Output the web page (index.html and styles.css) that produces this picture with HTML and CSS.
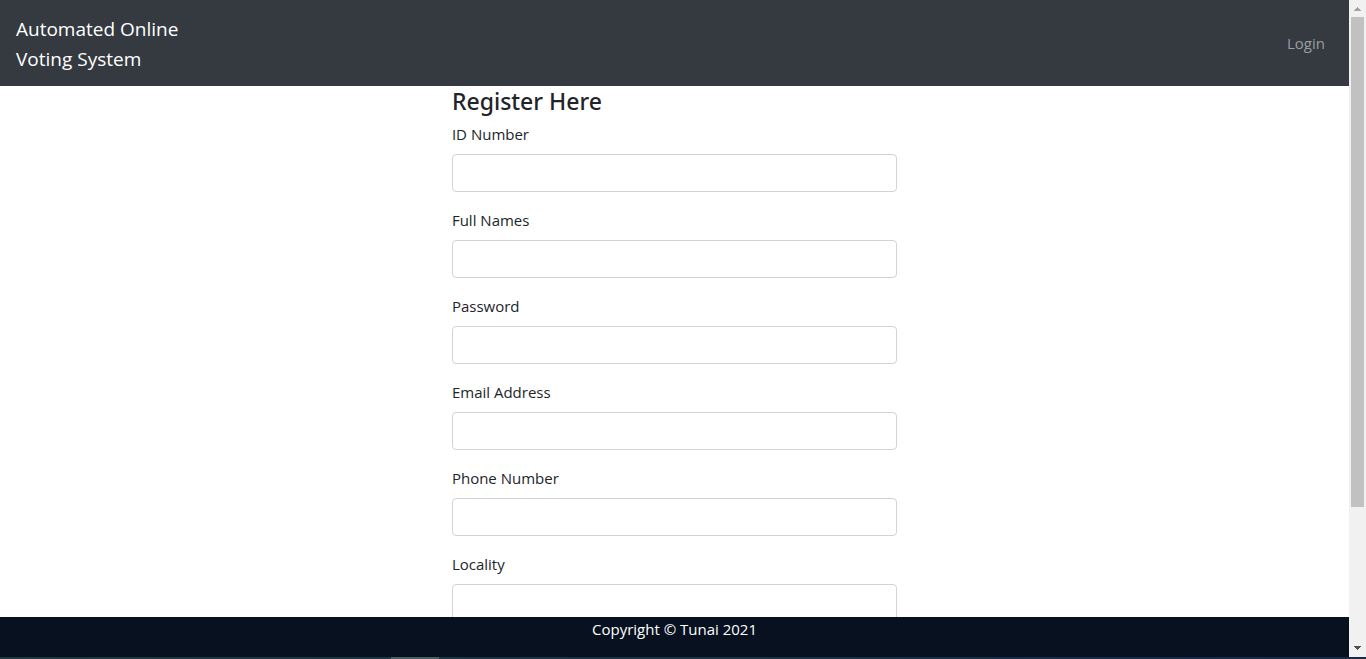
FILE: index.html
```html
<!DOCTYPE html>
<html lang="en">
<head>
<meta charset="utf-8">
<meta name="viewport" content="width=device-width, initial-scale=1">
<title>Automated Online Voting System</title>
<link rel="stylesheet" href="styles.css">
</head>
<body>
<div class="window">
  <div class="page">
    <nav class="navbar">
      <a class="brand" href="#">Automated Online<br>Voting System</a>
      <a class="nav-link" href="#login">Login</a>
    </nav>
    <main class="content">
      <form class="register">
        <h1 class="title">Register Here</h1>
        <div class="group"><label for="idno">ID Number</label><input id="idno" type="text"></div>
        <div class="group"><label for="names">Full Names</label><input id="names" type="text"></div>
        <div class="group"><label for="password">Password</label><input id="password" type="password"></div>
        <div class="group"><label for="email">Email Address</label><input id="email" type="email"></div>
        <div class="group"><label for="phone">Phone Number</label><input id="phone" type="tel"></div>
        <div class="group"><label for="locality">Locality</label><input id="locality" type="text"></div>
      </form>
    </main>
    <footer class="footer">Copyright © Tunai 2021</footer>
  </div>
  <div class="scrollbar" aria-hidden="true">
    <svg class="arrow" viewBox="0 0 17 17" shape-rendering="crispEdges"><path fill="#a3a3a3" d="M8 7h1v1h1v1h1v1h1v1H5v-1h1V9h1V8h1z"/></svg>
    <div class="track"><div class="thumb"></div></div>
    <svg class="arrow" viewBox="0 0 17 17" shape-rendering="crispEdges"><path fill="#505050" d="M5 6h7v1h-1v1h-1v1H9v1H8V9H7V8H6V7H5z"/></svg>
  </div>
</div>
<div class="taskbar" aria-hidden="true"><div class="task"></div></div>
</body>
</html>
```
FILE: styles.css
```css
* { box-sizing: border-box; }

body {
  margin: 0;
  height: 100vh;
  display: flex;
  flex-direction: column;
  overflow: hidden;
  background: #fff;
  color: #212529;
  font-family: "Segoe UI", "Open Sans", "Noto Sans", sans-serif;
  font-size: 15px;
  line-height: 24px;
}

.window { flex: 1; min-height: 0; display: flex; }

.page { flex: 1; min-width: 0; display: flex; flex-direction: column; }

.navbar {
  flex: none;
  display: flex;
  align-items: center;
  justify-content: space-between;
  padding: 8px 16px;
  background: #343a40;
}

.brand {
  padding: 6px 0 4px;
  color: #fff;
  font-size: 19px;
  line-height: 30px;
  text-decoration: none;
}

.nav-link { padding: 8px; color: #9a9da0; text-decoration: none; }

.content { flex: 1; min-height: 0; overflow: hidden; }

.register { width: 33%; margin: 0 auto; }

.title {
  margin: 0;
  padding: 1px 0 7px;
  font-family: "Segoe UI", "Noto Sans", "Open Sans", sans-serif;
  font-size: 23px;
  font-weight: 500;
  line-height: 28px;
}

.group { display: flex; flex-direction: column; gap: 8px; margin-bottom: 16px; }

.group input {
  width: 100%;
  height: 38px;
  padding: 6px 12px;
  border: 1px solid #ced4da;
  border-radius: 4px;
  background: #fff;
  color: #495057;
  font: inherit;
}

.footer {
  flex: none;
  height: 40px;
  background: #071120;
  color: #fff;
  text-align: center;
}

.scrollbar {
  flex: none;
  width: 17px;
  display: flex;
  flex-direction: column;
  background: #f1f1f1;
}

.arrow { flex: none; display: block; width: 17px; height: 17px; }
.track { flex: 1; padding: 0 2px; }
.thumb { height: 78.6%; background: #c1c1c1; }

.taskbar { flex: none; height: 2px; padding-left: 391px; background: linear-gradient(90deg, #233840, #1f3042 60%, #1b2846); }
.task { width: 48px; height: 2px; background: #4b5c62; }
```
